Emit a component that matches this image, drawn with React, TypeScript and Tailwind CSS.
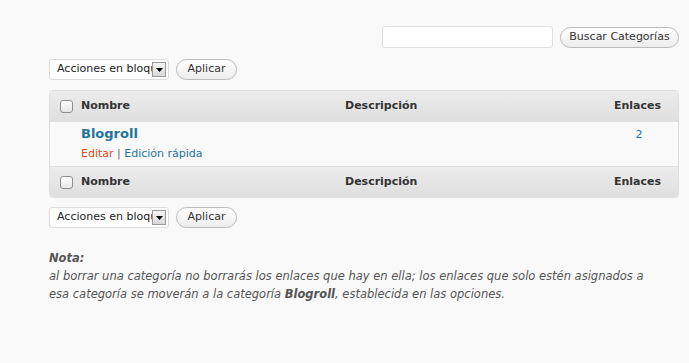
import React from "react";

const font = { fontFamily: '"DejaVu Sans", "Lucida Grande", Verdana, sans-serif' };

function Checkbox() {
  return (
    <span className="inline-block w-[13px] h-[13px] rounded-[3px] border border-[#8f8f8f] bg-gradient-to-b from-white to-[#e6e6e6] shadow-[inset_0_1px_0_#fff]" />
  );
}

function Select() {
  return (
    <div className="flex items-center h-[21px] w-[120px] bg-white border border-[#dcdcdc] rounded-[3px] pl-[7px] pr-[2px] text-[11px] text-[#222]">
      <span className="flex-1 overflow-hidden whitespace-nowrap">Acciones en bloque</span>
      <span className="w-[14px] h-[15px] bg-gradient-to-b from-[#f4f4f4] to-[#d9d9d9] border border-[#999] flex items-center justify-center">
        <svg width="7" height="4" viewBox="0 0 7 4"><path d="M0 0h7L3.5 4z" fill="#000" /></svg>
      </span>
    </div>
  );
}

function Btn({ children, w }: { children: React.ReactNode; w: string }) {
  return (
    <button className={`h-[21px] ${w} rounded-full border border-[#bbb] bg-gradient-to-b from-white to-[#ededed] text-[11px] text-[#333] flex items-center justify-center`}>
      {children}
    </button>
  );
}

function HeadRow({ top }: { top?: boolean }) {
  return (
    <div className={`flex items-center h-[31px] bg-gradient-to-b from-[#ececec] to-[#dfdfdf] ${top ? "border-b border-[#dfdfdf]" : "border-t border-[#dfdfdf]"} text-[11px] font-bold text-[#333]`}>
      <div className="w-[31px] flex justify-center pl-[1px]"><Checkbox /></div>
      <div className="w-[264px]">Nombre</div>
      <div className="flex-1">Descripción</div>
      <div className="pr-[17px]">Enlaces</div>
    </div>
  );
}

export default function App() {
  return (
    <div className="w-[689px] h-[363px] bg-[#f9f9f9] overflow-hidden" style={font}>
      <div className="pl-[49px] pr-[10px]">
        <div className="flex justify-end items-center gap-[7px] pt-[26px]">
          <div className="w-[171px] h-[22px] bg-white border border-[#dfdfdf] rounded-[3px]" />
          <Btn w="w-[119px]">Buscar Categorías</Btn>
        </div>
        <div className="flex items-center gap-[7px] mt-[11px]">
          <Select />
          <Btn w="w-[61px]">Aplicar</Btn>
        </div>
        <div className="mt-[10px] border border-[#dfdfdf] rounded-[4px] overflow-hidden bg-[#f9f9f9]">
          <HeadRow top />
          <div className="flex h-[44px] pt-[3px] text-[11px]">
            <div className="w-[31px]" />
            <div className="w-[264px]">
              <div className="text-[13px] font-bold text-[#21759b] leading-[18px]">Blogroll</div>
              <div className="mt-[4px] leading-[14px]">
                <span className="text-[#d54e21]">Editar</span>
                <span className="text-[#666]"> | </span>
                <span className="text-[#21759b]">Edición rápida</span>
              </div>
            </div>
            <div className="flex-1" />
            <div className="w-[60px] text-center text-[#21759b] pt-[2px] pr-[18px]">2</div>
          </div>
          <HeadRow />
        </div>
        <div className="flex items-center gap-[7px] mt-[9px]">
          <Select />
          <Btn w="w-[61px]">Aplicar</Btn>
        </div>
        <div className="mt-[21px] text-[11.5px] italic text-[#555] leading-[18px] whitespace-nowrap">
          <div className="font-bold">Nota:</div>
          <div>al borrar una categoría no borrarás los enlaces que hay en ella; los enlaces que solo estén asignados a</div>
          <div>esa categoría se moverán a la categoría <b>Blogroll</b>, establecida en las opciones.</div>
        </div>
      </div>
    </div>
  );
}
